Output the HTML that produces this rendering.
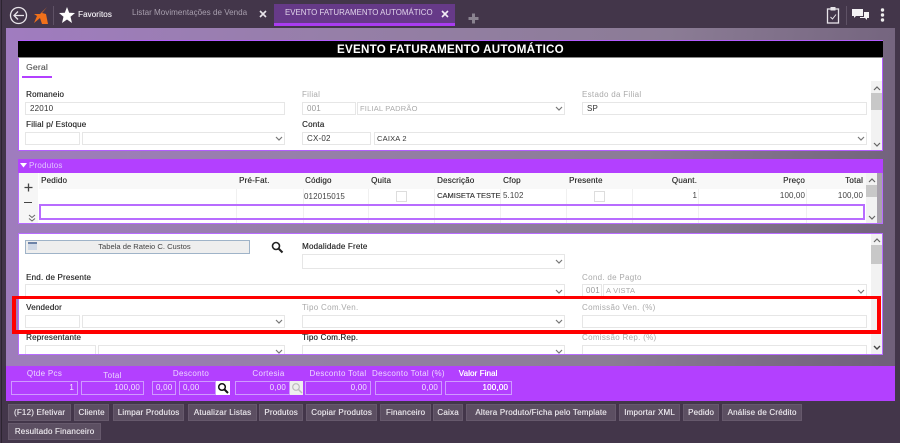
<!DOCTYPE html>
<html><head><meta charset="utf-8"><style>
html,body{margin:0;padding:0;width:900px;height:443px;overflow:hidden;background:#43364a}
#r{position:absolute;left:0;top:0;width:900px;height:443px;overflow:hidden;font-family:"Liberation Sans",sans-serif;font-size:8px;color:#333;filter:blur(.35px)}
#r div,#r span.a,#r svg{position:absolute}
.t{white-space:nowrap;line-height:10px;letter-spacing:.2px}
.l{color:#333;font-size:8px;text-shadow:.25px 0 currentColor}
.g{color:#aaa;font-size:8px;letter-spacing:.3px}
.i{box-sizing:border-box;border:1px solid #e6e6e6;background:#fff;height:13px;line-height:11px;padding-left:4px;white-space:nowrap;letter-spacing:.2px}
.w{color:#fff}
.p{box-sizing:border-box;height:14px;border:1px solid #cf9aff;color:#f3e6ff;text-align:right;padding-right:3px;line-height:12px;background:#b340ff;letter-spacing:.2px}
.pl{color:#ecd8ff;font-size:8px;line-height:10px;white-space:nowrap;text-align:center;letter-spacing:.3px}
.b{box-sizing:border-box;height:17px;background:#5c4f62;border:1px solid #66596c;color:#e4e0e6;text-align:center;line-height:15px;white-space:nowrap;font-size:8px;letter-spacing:.2px;text-shadow:.25px 0 currentColor}
.h{color:#333;line-height:10px;white-space:nowrap;letter-spacing:.2px;text-shadow:.2px 0 currentColor}
.c{line-height:10px;white-space:nowrap;color:#444;letter-spacing:.1px}
.sep{width:1px;background:#f0f0f0}
</style></head><body><div id="r">
<div style="left:1px;top:0;width:1px;height:443px;background:#2c2430"></div>
<!-- main panel -->
<div style="left:6px;top:28px;width:889px;height:338px;background:linear-gradient(100deg,#a07cc0 0%,#967fa8 35%,#8b7c95 70%,#6f5f79 100%)"></div>
<!-- top bar -->
<svg style="left:9px;top:6px" width="19" height="19" viewBox="0 0 19 19"><circle cx="9.5" cy="9.5" r="8" fill="none" stroke="#e8e4ea" stroke-width="1.3"/><path d="M15 9.5H5M9 5.5L5 9.500L9 13.500" fill="none" stroke="#e8e4ea" stroke-width="1.3"/></svg>
<svg style="left:33px;top:6px" width="16" height="19" viewBox="0 0 16 19"><path d="M14 1L9 7L13 8L15 18H9L7 12L1 17L4 10L1 8H7Z" fill="#f0701a"/></svg>
<div style="left:53px;top:6px;width:1px;height:19px;background:#5f5266"></div>
<svg style="left:58px;top:6px" width="18" height="18" viewBox="0 0 18 18"><path d="M9 1L11.2 6.8L17 7L12.5 10.8L14 17L9 13.5L4 17L5.5 10.8L1 7L6.8 6.8Z" fill="#fff"/></svg>
<div class="t" style="left:78px;top:10px;color:#e8e4ea;letter-spacing:.1px;text-shadow:.25px 0 currentColor">Favoritos</div>
<div class="t" style="left:132px;top:8px;color:#a89fae;font-size:8.1px;letter-spacing:0">Listar Movimentações de Venda</div>
<svg style="left:259px;top:10px" width="8" height="8" viewBox="0 0 8 8"><path d="M1 1L7 7M7 1L1 7" stroke="#e8e4ea" stroke-width="1.6"/></svg>
<div style="left:274px;top:4px;width:181px;height:22px;background:#663a88"></div>
<div style="left:274px;top:23px;width:181px;height:3px;background:#a93cf0"></div>
<div class="t" style="left:285px;top:8px;color:#e0d4ea;font-size:7.9px;letter-spacing:0">EVENTO FATURAMENTO AUTOMÁTICO</div>
<svg style="left:441px;top:10px" width="8" height="8" viewBox="0 0 8 8"><path d="M1 1L7 7M7 1L1 7" stroke="#f2eef5" stroke-width="1.6"/></svg>
<svg style="left:468px;top:13px" width="11" height="11" viewBox="0 0 11 11"><path d="M5.5 0.5V10.5M.5 5.5H10.5" stroke="#8a8390" stroke-width="3"/></svg>
<svg style="left:826px;top:6px" width="15" height="18" viewBox="0 0 15 18"><rect x="1.5" y="3" width="11" height="14" fill="none" stroke="#e8e4ea" stroke-width="1.3"/><rect x="4.5" y="1" width="5" height="3.5" fill="#e8e4ea"/><path d="M4.5 11L6.5 13L10 8.5" fill="none" stroke="#e8e4ea"/></svg>
<div style="left:846px;top:6px;width:1px;height:19px;background:#5f5266"></div>
<svg style="left:851px;top:8px" width="19" height="14" viewBox="0 0 19 14"><path d="M1 1H12V8H5L3 10V8H1Z" fill="#f4f2f5"/><path d="M13 4H18V10H16V12L14 10H9V9H13Z" fill="#f4f2f5"/></svg>
<svg style="left:880px;top:8px" width="5" height="14" viewBox="0 0 5 14"><circle cx="2.5" cy="2" r="1.7" fill="#eee"/><circle cx="2.5" cy="7" r="1.7" fill="#eee"/><circle cx="2.5" cy="12" r="1.7" fill="#eee"/></svg>

<!-- Upper panel -->
<div style="left:18px;top:40px;width:865px;height:111px;background:#fff;box-sizing:border-box;border:1px solid #b35cff"></div>
<div style="left:18px;top:41px;width:865px;height:16px;background:#000;border-bottom:1px solid #888"></div>
<div class="t w" style="left:18px;top:43px;width:865px;text-align:center;font-size:11.6px;font-weight:bold;line-height:13px;letter-spacing:.25px">EVENTO FATURAMENTO AUTOMÁTICO</div>
<div class="t" style="left:26px;top:62px;color:#666;font-size:8.5px;text-shadow:.3px 0 currentColor">Geral</div>
<div style="left:22px;top:76px;width:30px;height:2px;background:#b340ff"></div>

<div class="t l" style="left:26px;top:90px">Romaneio</div>
<div class="i" style="left:25px;top:102px;width:260px">22010</div>
<div class="t g" style="left:302px;top:90px">Filial</div>
<div class="i" style="left:302px;top:102px;width:54px;color:#999">001</div>
<div class="i" style="left:357px;top:102px;width:208px;color:#aaa;padding-left:2px;font-size:7.5px">FILIAL PADRÃO</div>
<svg style="left:555px;top:106px" width="8" height="6" viewBox="0 0 8 6"><path d="M1 1L4 4L7 1" fill="none" stroke="#777" stroke-width="1.2"/></svg>
<div class="t g" style="left:582px;top:90px">Estado da Filial</div>
<div class="i" style="left:582px;top:102px;width:285px">SP</div>
<div class="t l" style="left:26px;top:120px">Filial p/ Estoque</div>
<div class="i" style="left:25px;top:132px;width:55px"></div>
<div class="i" style="left:82px;top:132px;width:203px"></div>
<svg style="left:275px;top:136px" width="8" height="6" viewBox="0 0 8 6"><path d="M1 1L4 4L7 1" fill="none" stroke="#777" stroke-width="1.2"/></svg>
<div class="t l" style="left:302px;top:120px">Conta</div>
<div class="i" style="left:302px;top:132px;width:69px">CX-02</div>
<div class="i" style="left:374px;top:132px;width:493px;padding-left:2px;font-size:7.5px">CAIXA 2</div>
<svg style="left:857px;top:136px" width="8" height="6" viewBox="0 0 8 6"><path d="M1 1L4 4L7 1" fill="none" stroke="#777" stroke-width="1.2"/></svg>
<div style="left:871px;top:81px;width:11px;height:69px;background:#f2f2f2"></div>
<div style="left:871px;top:93px;width:11px;height:17px;background:#c8c8c8"></div>
<svg style="left:873px;top:85px" width="8" height="6" viewBox="0 0 8 6"><path d="M1 5L4 2L7 5" fill="none" stroke="#666" stroke-width="1.2"/></svg>
<svg style="left:873px;top:142px" width="8" height="6" viewBox="0 0 8 6"><path d="M1 1L4 4L7 1" fill="none" stroke="#666" stroke-width="1.2"/></svg>

<!-- Produtos -->
<div style="left:18px;top:159px;width:865px;height:14px;background:#b340ff"></div>
<svg style="left:20px;top:163px" width="7" height="5" viewBox="0 0 7 5"><path d="M0 0H7L3.500 4.500Z" fill="#fff"/></svg>
<div class="t" style="left:29px;top:160px;color:#e2c4ff;line-height:11px">Produtos</div>
<div style="left:18px;top:173px;width:865px;height:51px;background:#fff;box-sizing:border-box;border:1px solid #b86cff;border-top:0"></div>
<div style="left:19px;top:173px;width:19px;height:50px;background:#f6f6f6"></div>
<div style="left:39px;top:173px;width:827px;height:16px;background:#f8f8f8"></div>
<div style="left:866px;top:173px;width:11px;height:50px;background:#f2f2f2"></div>
<div style="left:877px;top:173px;width:5px;height:50px;background:#a9a3ad"></div>
<div style="left:866px;top:185px;width:11px;height:12px;background:#c8c8c8"></div>
<svg style="left:868px;top:177px" width="8" height="6" viewBox="0 0 8 6"><path d="M1 5L4 2L7 5" fill="none" stroke="#666" stroke-width="1.2"/></svg>
<svg style="left:868px;top:215px" width="8" height="6" viewBox="0 0 8 6"><path d="M1 1L4 4L7 1" fill="none" stroke="#666" stroke-width="1.2"/></svg>
<svg style="left:24px;top:183px" width="9" height="9" viewBox="0 0 9 9"><path d="M4.500 .5V8.500M.5 4.500H8.500" stroke="#444" stroke-width="1.300"/></svg>
<div style="left:24px;top:202px;width:8px;height:1px;background:#444"></div>
<svg style="left:28px;top:214px" width="8" height="8" viewBox="0 0 8 8"><path d="M1 1L4 3.500L7 1M1 4.500L4 7L7 4.500" fill="none" stroke="#666"/></svg>
<div class="sep" style="left:236px;top:189px;height:34px"></div>
<div class="sep" style="left:303px;top:189px;height:34px"></div>
<div class="sep" style="left:368px;top:189px;height:34px"></div>
<div class="sep" style="left:434px;top:189px;height:34px"></div>
<div class="sep" style="left:500px;top:189px;height:34px"></div>
<div class="sep" style="left:566px;top:189px;height:34px"></div>
<div class="sep" style="left:632px;top:189px;height:34px"></div>
<div class="sep" style="left:698px;top:189px;height:34px"></div>
<div class="sep" style="left:806px;top:189px;height:34px"></div>
<div class="h" style="left:41px;top:176px">Pedido</div>
<div class="h" style="left:239px;top:176px">Pré-Fat.</div>
<div class="h" style="left:305px;top:176px">Código</div>
<div class="h" style="left:371px;top:176px">Quita</div>
<div class="h" style="left:437px;top:176px">Descrição</div>
<div class="h" style="left:503px;top:176px">Cfop</div>
<div class="h" style="left:569px;top:176px">Presente</div>
<div class="h" style="left:640px;top:176px;width:57px;text-align:right">Quant.</div>
<div class="h" style="left:745px;top:176px;width:60px;text-align:right">Preço</div>
<div class="h" style="left:803px;top:176px;width:60px;text-align:right">Total</div>
<div class="c" style="left:304px;top:192px">012015015</div>
<div style="left:396px;top:191px;width:11px;height:11px;box-sizing:border-box;border:1px solid #ddd"></div>
<div class="c" style="left:437px;top:191px;font-size:7.5px;letter-spacing:0;text-shadow:.2px 0 currentColor">CAMISETA TESTE</div>
<div class="c" style="left:503px;top:191px">5.102</div>
<div style="left:594px;top:191px;width:11px;height:11px;box-sizing:border-box;border:1px solid #ddd"></div>
<div class="c" style="left:640px;top:191px;width:57px;text-align:right">1</div>
<div class="c" style="left:745px;top:191px;width:60px;text-align:right">100,00</div>
<div class="c" style="left:803px;top:191px;width:60px;text-align:right">100,00</div>
<div style="left:39px;top:204px;width:826px;height:16px;box-sizing:border-box;border:2px solid #b86cff"></div>

<!-- Lower panel -->
<div style="left:18px;top:233px;width:865px;height:122px;background:#fff;box-sizing:border-box;border:1px solid #b86cff"></div>
<div style="left:25px;top:240px;width:225px;height:14px;box-sizing:border-box;background:#eeeeee;border:1px solid #9fb3c8;text-align:center;line-height:12px;color:#444;font-size:7.6px;letter-spacing:0;padding-left:14px">Tabela de Rateio C. Custos</div>
<div style="left:28px;top:242px;width:9px;height:8px;background:#cfd8e6;border-top:2px solid #6c83a8;box-sizing:border-box"></div>
<svg style="left:271px;top:241px" width="13" height="13" viewBox="0 0 13 13"><circle cx="5" cy="5" r="3.500" fill="none" stroke="#222" stroke-width="1.600"/><path d="M7.500 7.500L11.500 11.500" stroke="#222" stroke-width="2"/></svg>
<div class="t l" style="left:302px;top:242px">Modalidade Frete</div>
<div class="i" style="left:302px;top:254px;width:263px;height:15px"></div>
<svg style="left:555px;top:259px" width="8" height="6" viewBox="0 0 8 6"><path d="M1 1L4 4L7 1" fill="none" stroke="#777" stroke-width="1.200"/></svg>
<div class="t l" style="left:26px;top:273px">End. de Presente</div>
<div class="i" style="left:25px;top:284px;width:540px;height:14px"></div>
<svg style="left:555px;top:289px" width="8" height="6" viewBox="0 0 8 6"><path d="M1 1L4 4L7 1" fill="none" stroke="#777" stroke-width="1.200"/></svg>
<div class="t g" style="left:582px;top:273px">Cond. de Pagto</div>
<div class="i" style="left:582px;top:284px;width:20px;height:14px;color:#999;padding-left:3px">001</div>
<div class="i" style="left:603px;top:284px;width:264px;height:14px;color:#aaa;padding-left:2px;font-size:7.500px">A VISTA</div>
<svg style="left:857px;top:289px" width="8" height="6" viewBox="0 0 8 6"><path d="M1 1L4 4L7 1" fill="none" stroke="#777" stroke-width="1.200"/></svg>

<div class="t l" style="left:26px;top:303px">Vendedor</div>
<div class="i" style="left:25px;top:315px;width:55px"></div>
<div class="i" style="left:82px;top:315px;width:203px"></div>
<svg style="left:275px;top:319px" width="8" height="6" viewBox="0 0 8 6"><path d="M1 1L4 4L7 1" fill="none" stroke="#777" stroke-width="1.200"/></svg>
<div class="t g" style="left:302px;top:303px">Tipo Com.Ven.</div>
<div class="i" style="left:302px;top:315px;width:263px"></div>
<svg style="left:555px;top:319px" width="8" height="6" viewBox="0 0 8 6"><path d="M1 1L4 4L7 1" fill="none" stroke="#777" stroke-width="1.200"/></svg>
<div class="t g" style="left:582px;top:303px">Comissão Ven. (%)</div>
<div class="i" style="left:582px;top:315px;width:285px"></div>

<div class="t l" style="left:26px;top:333px">Representante</div>
<div class="i" style="left:25px;top:345px;width:71px;height:9px;border-bottom:0"></div>
<div class="i" style="left:98px;top:345px;width:187px;height:9px;border-bottom:0"></div>
<svg style="left:275px;top:349px" width="8" height="5" viewBox="0 0 8 5"><path d="M1 1L4 4L7 1" fill="none" stroke="#777" stroke-width="1.200"/></svg>
<div class="t l" style="left:302px;top:333px">Tipo Com.Rep.</div>
<div class="i" style="left:302px;top:345px;width:263px;height:9px;border-bottom:0"></div>
<svg style="left:555px;top:349px" width="8" height="5" viewBox="0 0 8 5"><path d="M1 1L4 4L7 1" fill="none" stroke="#777" stroke-width="1.200"/></svg>
<div class="t g" style="left:582px;top:333px">Comissão Rep. (%)</div>
<div class="i" style="left:582px;top:345px;width:285px;height:9px;border-bottom:0"></div>

<div style="left:871px;top:234px;width:11px;height:120px;background:#f2f2f2"></div>
<div style="left:871px;top:245px;width:11px;height:19px;background:#c8c8c8"></div>
<svg style="left:873px;top:237px" width="8" height="6" viewBox="0 0 8 6"><path d="M1 5L4 2L7 5" fill="none" stroke="#666" stroke-width="1.200"/></svg>
<svg style="left:873px;top:345px" width="8" height="6" viewBox="0 0 8 6"><path d="M1 1L4 4L7 1" fill="none" stroke="#444" stroke-width="1.400"/></svg>

<!-- red box -->
<div style="left:12px;top:296px;width:869px;height:38px;box-sizing:border-box;border:4px solid #f00;border-top-width:3px"></div>

<!-- totals bar -->
<div style="left:6px;top:366px;width:889px;height:35px;background:#b340ff"></div>
<div class="pl" style="left:11px;top:369px;width:67px">Qtde Pcs</div>
<div class="p" style="left:11px;top:381px;width:67px">1</div>
<div class="pl" style="left:81px;top:371px;width:63px">Total</div>
<div class="p" style="left:81px;top:381px;width:63px">100,00</div>
<div class="pl" style="left:152px;top:369px;width:78px">Desconto</div>
<div class="p" style="left:152px;top:381px;width:24px;text-align:left;padding-left:3px">0,00</div>
<div class="p" style="left:179px;top:381px;width:37px;text-align:left;padding-left:3px">0,00</div>
<div style="left:216px;top:381px;width:14px;height:14px;background:#fff"></div>
<svg style="left:217px;top:382px" width="12" height="12" viewBox="0 0 12 12"><circle cx="5" cy="5" r="3.300" fill="none" stroke="#111" stroke-width="1.500"/><path d="M7.500 7.500L11 11" stroke="#111" stroke-width="2"/></svg>
<div class="pl" style="left:235px;top:369px;width:67px">Cortesia</div>
<div class="p" style="left:235px;top:381px;width:55px">0,00</div>
<div style="left:290px;top:381px;width:13px;height:14px;background:#eee"></div>
<svg style="left:291px;top:382px" width="12" height="12" viewBox="0 0 12 12"><circle cx="5" cy="5" r="3.300" fill="none" stroke="#bbb" stroke-width="1.200"/><path d="M7.500 7.500L11 11" stroke="#bbb" stroke-width="1.500"/></svg>
<div class="pl" style="left:305px;top:369px;width:66px">Desconto Total</div>
<div class="p" style="left:305px;top:381px;width:66px">0,00</div>
<div class="pl" style="left:372px;top:369px;width:72px">Desconto Total (%)</div>
<div class="p" style="left:375px;top:381px;width:67px">0,00</div>
<div class="pl" style="left:445px;top:369px;width:66px;color:#fff;letter-spacing:.1px;text-shadow:.3px 0 currentColor">Valor Final</div>
<div class="p" style="left:445px;top:381px;width:67px;color:#fff;text-shadow:.3px 0 currentColor">100,00</div>

<!-- buttons -->
<div class="b" style="left:8px;top:404px;width:63px">(F12) Efetivar</div>
<div class="b" style="left:74px;top:404px;width:35px">Cliente</div>
<div class="b" style="left:113px;top:404px;width:71px">Limpar Produtos</div>
<div class="b" style="left:188px;top:404px;width:69px">Atualizar Listas</div>
<div class="b" style="left:259px;top:404px;width:44px">Produtos</div>
<div class="b" style="left:306px;top:404px;width:71px">Copiar Produtos</div>
<div class="b" style="left:380px;top:404px;width:51px">Financeiro</div>
<div class="b" style="left:433px;top:404px;width:30px">Caixa</div>
<div class="b" style="left:466px;top:404px;width:150px">Altera Produto/Ficha pelo Template</div>
<div class="b" style="left:619px;top:404px;width:61px">Importar XML</div>
<div class="b" style="left:683px;top:404px;width:36px">Pedido</div>
<div class="b" style="left:722px;top:404px;width:80px">Análise de Crédito</div>
<div class="b" style="left:8px;top:423px;width:93px">Resultado Financeiro</div>
</div></body></html>
